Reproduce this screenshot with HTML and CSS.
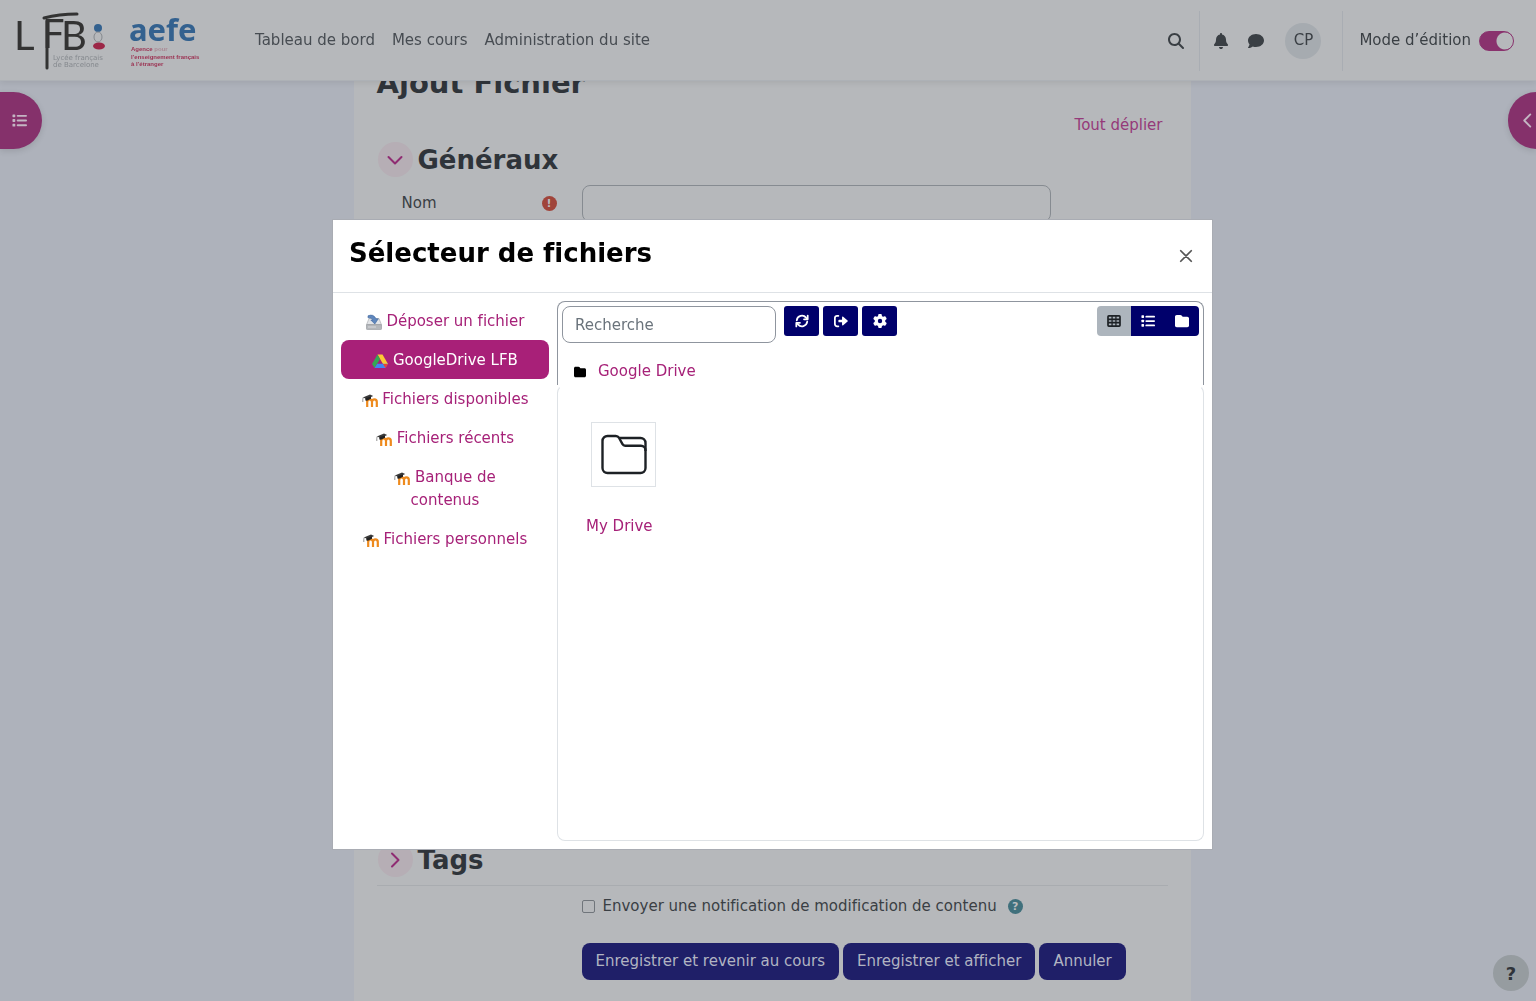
FILE: index.html
```html
<!DOCTYPE html>
<html lang="fr">
<head>
<meta charset="utf-8">
<title>Ajout Fichier</title>
<link rel="stylesheet" href="styles.css">
</head>
<body>
<svg class="sprite" aria-hidden="true">
  <symbol id="i-search" viewBox="0 0 512 512"><path d="M416 208c0 45.9-14.9 88.3-40 122.7L502.6 457.4c12.5 12.5 12.5 32.8 0 45.3s-32.8 12.5-45.3 0L330.7 376c-34.4 25.2-76.8 40-122.7 40C93.1 416 0 322.9 0 208S93.1 0 208 0S416 93.1 416 208zM208 352a144 144 0 1 0 0-288 144 144 0 1 0 0 288z"/></symbol>
  <symbol id="i-bell" viewBox="0 0 448 512"><path d="M224 0c-17.7 0-32 14.3-32 32V51.2C119 66 64 130.6 64 208v18.8c0 47-17.3 92.4-48.5 127.6l-7.4 8.3c-8.4 9.4-10.4 22.9-5.3 34.4S19.4 416 32 416H416c12.6 0 24-7.4 29.2-18.9s3.1-25-5.3-34.4l-7.4-8.3C401.3 319.2 384 273.9 384 226.8V208c0-77.4-55-142-128-156.8V32c0-17.7-14.3-32-32-32zm45.3 493.3c12-12 18.7-28.3 18.7-45.3H224 160c0 17 6.7 33.3 18.7 45.3s28.3 18.7 45.3 18.7s33.3-6.7 45.3-18.7z"/></symbol>
  <symbol id="i-comment" viewBox="0 0 512 512"><path d="M512 240c0 114.9-114.6 208-256 208c-37.1 0-72.3-6.4-104.1-17.9c-11.9 8.7-31.3 20.6-54.3 30.6C73.6 471.1 44.7 480 16 480c-6.5 0-12.3-3.9-14.8-9.9c-2.5-6-1.1-12.8 3.4-17.4l.3-.3c.3-.3 .7-.7 1.3-1.4c1.1-1.2 2.8-3.1 4.9-5.7c4.1-5 9.6-12.4 15.2-21.6c10-16.6 19.5-38.4 21.4-62.9C17.7 326.8 0 285.1 0 240C0 125.1 114.6 32 256 32s256 93.1 256 208z"/></symbol>
  <symbol id="i-gear" viewBox="0 0 512 512"><path d="M495.9 166.6c3.2 8.7 .5 18.4-6.4 24.6l-43.3 39.4c1.1 8.3 1.7 16.8 1.7 25.4s-.6 17.1-1.7 25.4l43.3 39.4c6.9 6.2 9.6 15.9 6.4 24.6c-4.4 11.9-9.7 23.3-15.8 34.3l-4.7 8.1c-6.6 11-14 21.4-22.1 31.2c-5.9 7.2-15.7 9.6-24.5 6.8l-55.7-17.7c-13.4 10.3-28.2 18.9-44 25.4l-12.5 57.1c-2 9.1-9 16.3-18.2 17.8c-13.8 2.3-28 3.5-42.5 3.5s-28.7-1.2-42.5-3.5c-9.2-1.5-16.2-8.7-18.2-17.8l-12.5-57.1c-15.8-6.5-30.6-15.1-44-25.4L83.1 425.9c-8.8 2.8-18.6 .3-24.5-6.8c-8.1-9.8-15.5-20.2-22.1-31.2l-4.7-8.1c-6.1-11-11.4-22.4-15.8-34.3c-3.2-8.7-.5-18.4 6.4-24.6l43.3-39.4C64.6 273.1 64 264.6 64 256s.6-17.1 1.7-25.4L22.4 191.2c-6.9-6.2-9.6-15.9-6.4-24.6c4.4-11.9 9.7-23.3 15.8-34.3l4.7-8.1c6.6-11 14-21.4 22.1-31.2c5.9-7.2 15.7-9.6 24.5-6.8l55.7 17.7c13.4-10.3 28.2-18.9 44-25.4l12.5-57.1c2-9.1 9-16.3 18.2-17.8C227.3 1.2 241.5 0 256 0s28.7 1.2 42.5 3.5c9.2 1.5 16.2 8.7 18.2 17.8l12.5 57.1c15.8 6.5 30.6 15.1 44 25.4l55.7-17.7c8.8-2.8 18.6-.3 24.5 6.8c8.1 9.8 15.5 20.2 22.1 31.2l4.7 8.1c6.1 11 11.4 22.4 15.8 34.3zM256 336a80 80 0 1 0 0-160 80 80 0 1 0 0 160z"/></symbol>
  <symbol id="i-folder" viewBox="0 0 512 512"><path d="M64 480H448c35.3 0 64-28.7 64-64V160c0-35.3-28.7-64-64-64H288c-10.1 0-19.6-4.7-25.6-12.8L243.2 57.6C231.1 41.5 212.1 32 192 32H64C28.7 32 0 60.7 0 96V416c0 35.3 28.7 64 64 64z"/></symbol>
  <symbol id="i-list" viewBox="0 0 16 16"><rect x="0.5" y="1.5" width="3" height="3" rx="0.7"/><rect x="0.5" y="6.5" width="3" height="3" rx="0.7"/><rect x="0.5" y="11.5" width="3" height="3" rx="0.7"/><rect x="5" y="2" width="11" height="2" rx="1"/><rect x="5" y="7" width="11" height="2" rx="1"/><rect x="5" y="12" width="11" height="2" rx="1"/></symbol>
  <symbol id="i-grid" viewBox="0 0 16 14"><path fill-rule="evenodd" d="M2 0h12a2 2 0 0 1 2 2v10a2 2 0 0 1-2 2H2a2 2 0 0 1-2-2V2a2 2 0 0 1 2-2zM2 2v2h3V2zM6.500 2v2h3V2zM11 2v2h3V2zM2 6v2h3V6zM6.500 6v2h3V6zM11 6v2h3V6zM2 10v2h3v-2zM6.500 10v2h3v-2zM11 10v2h3v-2z"/></symbol>
  <symbol id="i-refresh" viewBox="0 0 16 16"><g fill="none" stroke="currentColor" stroke-width="2" stroke-linecap="round" stroke-linejoin="round"><path d="M2 7.200a6 6 0 0 1 10.600-3L14 5.600M14 8.800a6 6 0 0 1-10.600 3L2 10.400"/><path d="M14.500 1.800v4.200h-4.200M1.500 14.200V10h4.200"/></g></symbol>
  <symbol id="i-exit" viewBox="0 0 16 16"><path d="M5 2H3.500A2.500 2.500 0 0 0 1 4.500v7A2.500 2.500 0 0 0 3.500 14H5" fill="none" stroke="currentColor" stroke-width="2" stroke-linecap="round"/><path d="M10.500 3.200c-.6-.5-1.300-.2-1.300.6V6.500H6a1 1 0 0 0-1 1v1a1 1 0 0 0 1 1h3.200v2.700c0 .8.700 1.100 1.300.6l5-4.200a.8.800 0 0 0 0-1.200z"/></symbol>
  <symbol id="i-down" viewBox="0 0 16 16"><path d="M1.500 5 8 11.500 14.500 5" fill="none" stroke="currentColor" stroke-width="2" stroke-linecap="round" stroke-linejoin="round"/></symbol>
  <symbol id="i-right" viewBox="0 0 16 16"><path d="M5 1.500 11.500 8 5 14.500" fill="none" stroke="currentColor" stroke-width="2" stroke-linecap="round" stroke-linejoin="round"/></symbol>
  <symbol id="i-left" viewBox="0 0 16 16"><path d="M11 1.500 4.500 8 11 14.500" fill="none" stroke="currentColor" stroke-width="2" stroke-linecap="round" stroke-linejoin="round"/></symbol>
  <symbol id="i-close" viewBox="0 0 16 16"><path d="M2 2l12 12M14 2 2 14" fill="none" stroke="currentColor" stroke-width="2" stroke-linecap="round"/></symbol>
  <symbol id="i-moodle" viewBox="0 0 16 16"><path d="M5.200 15V8M5.200 15V10q0-2.600 2.400-2.600T10 10V15M10 10q0-2.600 2.400-2.600T14.800 10V15" fill="none" stroke="#ee8a1d" stroke-width="2.200"/><path d="M.8 5.600 8 2.600l3.200 1.300L5 6.900z" fill="#3a3a3a"/><path d="M3.200 6.300 9 4.500v2.200L5 8.800 3.400 8.600z" fill="#222"/><path d="M1.200 5.500Q.6 7 .8 10" stroke="#777" stroke-width=".8" fill="none"/></symbol>
  <symbol id="i-upload" viewBox="0 0 16 16"><path d="M3 4.500h10l2.600 6.500H.4z" fill="#e3e5e8" stroke="#a3a6aa" stroke-width=".6"/><rect x=".4" y="10.600" width="15.200" height="5" rx="1" fill="#b4b7bb" stroke="#8d9095" stroke-width=".6"/><path d="M2 13h8" stroke="#d9dadd"/><path d="M2 1.800Q7.500-.5 10 4.800h2.300L8.800 10 4.800 6h2Q5.500 3.300 2 3.800z" fill="#5f87bd" stroke="#3f679d" stroke-width=".6"/></symbol>
  <symbol id="i-drive" viewBox="0 0 16 16"><path d="M5.500 1.500h5L16 11h-5z" fill="#fcc934"/><path d="M5.500 1.500 0 11l2.600 4L8 5.900z" fill="#34a853"/><path d="M2.600 15 5.200 10.800H16L13.400 15z" fill="#4285f4"/><path d="M13.400 15 16 11h-5z" fill="#ea4335"/></symbol>
  <symbol id="i-bigfolder" viewBox="0 0 48 42"><g fill="none" stroke="#1d2125" stroke-width="2.400" stroke-linejoin="round"><path d="M2.500 7a5 5 0 0 1 5-5h8.200a4 4 0 0 1 3.400 2l3.400 6.200a3 3 0 0 0 2.600 1.500H41a4.500 4.500 0 0 1 4.500 4.500V34a5 5 0 0 1-5 5h-33a5 5 0 0 1-5-5z"/><path d="M19 4h21.500a5 5 0 0 1 5 5v8"/></g></symbol>
</svg>

<header class="topbar">
  <a class="brand" href="#" aria-label="Accueil">
    <svg width="190" height="64" viewBox="0 0 190 64">
      <g class="logo-lfb"><text x="-3" y="41">L</text><text x="25" y="39">F</text><text x="44" y="41">B</text></g>
      <path d="M30 12V59M27 9Q42 5 60 5" fill="none" stroke="#333" stroke-width="3" stroke-linecap="round"/>
      <g class="logo-small"><text x="36" y="51">Lycée français</text><text x="36" y="58">de Barcelone</text></g>
      <circle cx="81" cy="19" r="4" fill="#33618f"/>
      <ellipse cx="81" cy="28" rx="4" ry="5" fill="none" stroke="#85898e"/>
      <ellipse cx="82" cy="37" rx="6" ry="3.500" fill="#9c2747"/>
      <text class="logo-aefe" x="112" y="32">aefe</text>
      <g class="logo-tag"><text x="114" y="42">Agence <tspan fill="#aa8a95">pour</tspan></text><text x="114" y="50">l’enseignement français</text><text x="114" y="57">à l’étranger</text></g>
    </svg>
  </a>
  <nav class="mainnav">
    <a href="#">Tableau de bord</a>
    <a href="#">Mes cours</a>
    <a href="#">Administration du site</a>
  </nav>
  <div class="tools">
    <button class="tool search" aria-label="Recherche"><svg width="16" height="16"><use href="#i-search"/></svg></button>
    <div class="usertools">
      <button class="tool" aria-label="Notifications"><svg width="14" height="16"><use href="#i-bell"/></svg></button>
      <button class="tool" aria-label="Messages"><svg width="16" height="16"><use href="#i-comment"/></svg></button>
      <button class="avatar">CP</button>
    </div>
    <label class="editmode">Mode d’édition <input type="checkbox" role="switch" checked></label>
  </div>
</header>

<button class="drawer drawer-left" aria-label="Ouvrir l’index du cours"><svg width="15" height="15"><use href="#i-list"/></svg></button>
<button class="drawer drawer-right" aria-label="Ouvrir les blocs"><svg width="15" height="15"><use href="#i-left"/></svg></button>

<main class="page">
  <h2 class="title">Ajout Fichier</h2>
  <div class="expand"><a href="#">Tout déplier</a></div>
  <form>
    <section class="general">
      <h3 class="section"><button type="button" class="fold" aria-label="Replier"><svg width="16" height="16"><use href="#i-down"/></svg></button>Généraux</h3>
      <div class="field">
        <label for="name">Nom</label>
        <span class="badge required">!</span>
        <input id="name" type="text">
      </div>
    </section>
    <section class="tags">
      <h3 class="section"><button type="button" class="fold" aria-label="Déplier"><svg width="16" height="16"><use href="#i-right"/></svg></button>Tags</h3>
    </section>
    <div class="notify">
      <input id="notify" type="checkbox"><label for="notify">Envoyer une notification de modification de contenu</label>
      <span class="badge help">?</span>
    </div>
    <div class="actions">
      <button type="button">Enregistrer et revenir au cours</button>
      <button type="button">Enregistrer et afficher</button>
      <button type="button">Annuler</button>
    </div>
  </form>
</main>

<button class="helpfab">?</button>

<div class="overlay">
  <div class="modal" role="dialog" aria-labelledby="picker">
    <div class="modal-head">
      <h3 id="picker">Sélecteur de fichiers</h3>
      <button class="close" aria-label="Fermer"><svg width="14" height="14"><use href="#i-close"/></svg></button>
    </div>
    <div class="modal-body">
      <nav class="repos">
        <a href="#"><svg width="16" height="16"><use href="#i-upload"/></svg> Déposer un fichier</a>
        <a href="#" class="active"><svg width="16" height="16"><use href="#i-drive"/></svg> GoogleDrive LFB</a>
        <a href="#"><svg width="16" height="16"><use href="#i-moodle"/></svg> Fichiers disponibles</a>
        <a href="#"><svg width="16" height="16"><use href="#i-moodle"/></svg> Fichiers récents</a>
        <a href="#"><svg width="16" height="16"><use href="#i-moodle"/></svg> Banque de contenus</a>
        <a href="#"><svg width="16" height="16"><use href="#i-moodle"/></svg> Fichiers personnels</a>
      </nav>
      <div class="browser">
        <div class="browser-head">
          <div class="toolbar">
            <input type="search" placeholder="Recherche" aria-label="Recherche">
            <div class="btns">
              <button aria-label="Actualiser"><svg width="14" height="14"><use href="#i-refresh"/></svg></button>
              <button aria-label="Déconnexion"><svg width="14" height="14"><use href="#i-exit"/></svg></button>
              <button aria-label="Réglages"><svg width="14" height="14"><use href="#i-gear"/></svg></button>
            </div>
            <div class="views">
              <button class="on" aria-label="Icônes"><svg width="14" height="12"><use href="#i-grid"/></svg></button>
              <button aria-label="Liste"><svg width="14" height="14"><use href="#i-list"/></svg></button>
              <button aria-label="Arborescence"><svg width="14" height="14"><use href="#i-folder"/></svg></button>
            </div>
          </div>
          <div class="path"><svg width="12" height="12"><use href="#i-folder"/></svg><a href="#">Google Drive</a></div>
        </div>
        <div class="files">
          <a class="file" href="#">
            <span class="thumb"><svg width="48" height="42"><use href="#i-bigfolder"/></svg></span>
            <span>My Drive</span>
          </a>
        </div>
      </div>
    </div>
  </div>
</div>
</body>
</html>
```
FILE: styles.css
```css
* { box-sizing: border-box; }
body {
  margin: 0;
  min-height: 100vh;
  overflow: hidden;
  background: #aeb2bb;
  color: #3a3f44;
  font: 15px/23px "DejaVu Sans", Verdana, sans-serif;
  font-variant-ligatures: none;
}
button, input { font: inherit; font-variant-ligatures: none; color: inherit; }
button { border: 0; padding: 0; background: none; }
a { color: #953a79; text-decoration: none; }
h2, h3 { margin: 0; font-size: 26px; line-height: 32px; }
svg { fill: currentColor; }
.sprite { position: absolute; width: 0; height: 0; }

/* Top bar */
.topbar {
  position: fixed;
  inset: 0 0 auto;
  z-index: 2;
  height: 81px;
  display: flex;
  align-items: center;
  padding: 1px 22px 0 17px;
  background: #b6b8bb;
  border-bottom: 1px solid #adb1b6;
  box-shadow: 0 2px 6px rgba(0, 0, 0, .08);
}
.brand { display: flex; margin-right: 48px; }
.brand svg { overflow: visible; }
.logo-lfb { font: 40px Lato, sans-serif; fill: #333; }
.logo-small { font: 7px "DejaVu Sans", sans-serif; fill: #85898e; }
.logo-aefe { font: bold 31px "Noto Sans", sans-serif; fill: #33618f; }
.logo-tag { font: bold 6px "Liberation Sans", sans-serif; fill: #9c3353; }
.mainnav { display: flex; gap: 17px; }
.mainnav a { color: #474c52; }
.tools { margin-left: auto; display: flex; align-items: center; }
.tool { display: flex; }
.search { margin-right: 15px; }
.usertools {
  display: flex;
  align-items: center;
  gap: 20px;
  height: 60px;
  padding: 0 21px 0 14px;
  border: solid #a9adb3;
  border-width: 0 1px;
}
.avatar { width: 36px; height: 36px; margin-left: 1px; border-radius: 50%; background: #a6abb0; }
.editmode { display: flex; align-items: center; gap: 8px; padding-left: 16px; }
.editmode input {
  appearance: none;
  margin: 0;
  width: 35px;
  height: 20px;
  border-radius: 10px;
  border: 1px solid #89326d;
  background: radial-gradient(circle at 25px 9px, #b6b8bb 8px, #89326d 9px);
}

/* Drawer toggles */
.drawer {
  position: fixed;
  top: 92px;
  z-index: 1;
  height: 57px;
  display: flex;
  align-items: center;
  background: #85316b;
  color: #c4b6c3;
  box-shadow: 0 2px 6px rgba(0, 0, 0, .12);
}
.drawer-left { left: 0; width: 42px; padding-left: 12px; border-radius: 0 29px 29px 0; }
.drawer-right { right: 0; width: 28px; padding-left: 12px; border-radius: 29px 0 0 29px; }

/* Form page */
.page {
  max-width: 837px;
  min-height: 100vh;
  margin: 0 auto;
  position: relative;
  left: 4px;
  padding: 67px 23px 20px;
  background: #b6b8bb;
}
.title, .section { color: #2f343a; }
.title { font-size: 29px; }
.expand { display: flex; justify-content: flex-end; padding: 15px 5px 0 0; }
.section { display: flex; align-items: center; gap: 5px; }
.general .section { margin-top: 5px; }
.fold {
  display: grid;
  place-items: center;
  width: 35px;
  height: 35px;
  margin-left: 1px;
  border-radius: 50%;
  background: #b6aeb5;
  color: #8f2c72;
}
.field { display: flex; align-items: center; padding: 8px 0 0 25px; }
.field label { width: 140px; }
.field input {
  width: 469px;
  height: 37px;
  margin-left: 25px;
  border: 1px solid #868b91;
  border-radius: 8px;
  background: none;
}
.badge {
  display: grid;
  place-items: center;
  width: 15px;
  height: 15px;
  border-radius: 50%;
  color: #b9bcbf;
  font-size: 11px;
  font-weight: bold;
  line-height: 15px;
}
.required { background: #a0443a; }
.help { background: #40707c; }
.tags { margin-top: 620px; padding-bottom: 8px; border-bottom: 1px solid #a9acb0; }
.notify { display: flex; align-items: center; padding: 9px 0 0 205px; }
.notify input {
  appearance: none;
  width: 13px;
  height: 13px;
  margin: 0 8px 0 0;
  border: 1px solid #70757b;
  border-radius: 2px;
}
.help { margin-left: 11px; }
.actions { display: flex; gap: 4px; padding: 25px 0 0 205px; }
.actions button {
  height: 37px;
  padding: 0 14px;
  border-radius: 8px;
  background: #1f1f68;
  color: #b1b4c2;
  white-space: nowrap;
}
.helpfab {
  position: fixed;
  right: 7px;
  bottom: 10px;
  width: 36px;
  height: 36px;
  border-radius: 50%;
  background: #969ca0;
  color: #2f343a;
  font-size: 18px;
  font-weight: bold;
}

/* File picker */
.overlay {
  position: fixed;
  inset: 0;
  z-index: 3;
  display: flex;
  justify-content: center;
  align-items: flex-start;
  padding: 220px 0 0 9px;
}
.modal { width: 100%; max-width: 879px; background: #fff; color: #000; box-shadow: 0 0 0 1px #a9acb3; }
.modal-head {
  display: flex;
  justify-content: space-between;
  align-items: flex-start;
  padding: 17px 19px 23px 16px;
  border-bottom: 1px solid #dee2e6;
}
.close { display: flex; margin-top: 12px; color: #555; }
.modal-body { display: flex; gap: 8px; padding: 8px; }
.repos { width: 208px; flex: none; }
.repos a { display: block; padding: 9px 18px 7px; text-align: center; border-radius: 8px; color: #a62178; }
.repos svg { vertical-align: -4px; }
.repos .active { background: #a82078; color: #fff; }
.browser { flex: 1; display: flex; flex-direction: column; }
.browser-head {
  padding: 4px 4px 2px;
  border: 1px solid #8f959e;
  border-bottom: 0;
  border-radius: 8px 8px 0 0;
}
.toolbar { display: flex; align-items: flex-start; gap: 8px; }
.toolbar input {
  width: 214px;
  height: 37px;
  padding: 0 12px;
  border: 1px solid #8f959e;
  border-radius: 8px;
}
.toolbar input::placeholder { color: #6a737b; opacity: 1; }
.toolbar button {
  display: grid;
  place-items: center;
  width: 35px;
  height: 30px;
  border-radius: 3px;
  background: #00006b;
  color: #fff;
}
.btns { display: flex; gap: 4px; }
.views { display: flex; margin-left: auto; border-radius: 4px; overflow: hidden; }
.views button { width: 34px; border-radius: 0; }
.views .on { background: #adb5bd; color: #1d2125; }
.path { display: flex; align-items: center; gap: 12px; padding: 17px 12px 0; }
.path a, .file { color: #a62178; }
.files { height: 456px; padding: 36px 28px; border: 1px solid #dee2e6; border-top-color: transparent; border-radius: 8px; }
.file { display: inline-flex; flex-direction: column; gap: 28px; }
.thumb { display: grid; place-items: center; width: 65px; height: 65px; margin-left: 5px; border: 1px solid #dee2e6; }
```
